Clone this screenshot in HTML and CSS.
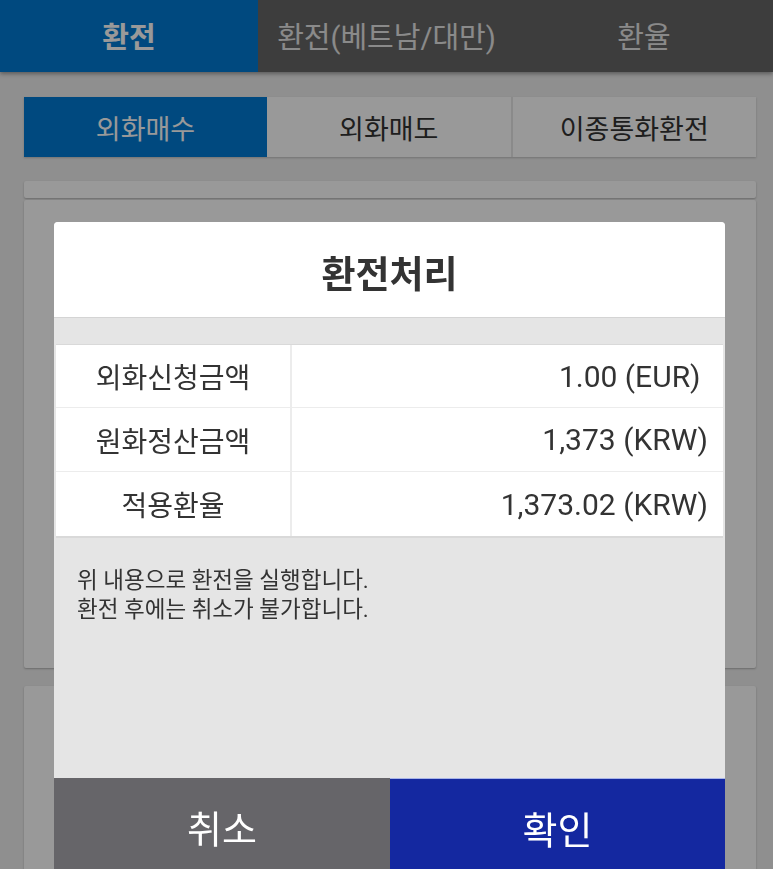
FILE: index.html
```html
<!DOCTYPE html>
<html lang="ko">
<head>
<meta charset="utf-8">
<link rel="stylesheet" href="styles.css">
</head>
<body>
<div class="page">
  <div class="topbar">
    <div class="toptab active">환전</div>
    <div class="toptab">환전(베트남/대만)</div>
    <div class="toptab">환율</div>
  </div>
  <div class="content">
    <div class="subtabs">
      <div class="subtab active">외화매수</div>
      <div class="subtab">외화매도</div>
      <div class="subtab">이종통화환전</div>
    </div>
    <div class="card card-thin"></div>
    <div class="card card-main"></div>
    <div class="card card-low"></div>
  </div>
</div>
<div class="overlay"></div>
<div class="modal">
  <div class="modal-title">환전처리</div>
  <div class="modal-body">
    <div class="table">
      <div class="row"><div class="label">외화신청금액</div><div class="value">1.00 (EUR)&nbsp;</div></div>
      <div class="row"><div class="label">원화정산금액</div><div class="value">1,373 (KRW)</div></div>
      <div class="row"><div class="label">적용환율</div><div class="value">1,373.02 (KRW)</div></div>
    </div>
    <p class="notice">위 내용으로 환전을 실행합니다.<br>환전 후에는 취소가 불가합니다.</p>
  </div>
  <div class="buttons">
    <div class="btn cancel">취소</div>
    <div class="btn ok">확인</div>
  </div>
</div>
</body>
</html>
```
FILE: styles.css
```css
html, body {
  margin: 0;
  padding: 0;
  height: 100%;
  overflow: hidden;
}
body {
  font-family: Roboto, "Noto Sans CJK KR", sans-serif;
  background: #eeeeee;
}
.page {
  height: 869px;
  display: flex;
  flex-direction: column;
}
.page > * { flex-shrink: 0; }
.topbar {
  display: flex;
  height: 72px;
  background: #666666;
  box-shadow: 0 2px 4px rgba(0,0,0,0.35);
  position: relative;
  z-index: 1;
}
.toptab {
  flex: 1;
  display: flex;
  align-items: center;
  justify-content: center;
  font-size: 29px;
  color: #e6e6e6;
  padding-bottom: 2px;
}
.toptab.active {
  flex: 0 0 258px;
  background: #007bd4;
  color: #ffffff;
  font-weight: 700;
}
.toptab:nth-child(2) { flex: 0 0 257px; }
.content {
  padding: 25px 17px 0 24px;
  display: flex;
  flex-direction: column;
}
.content > * { flex-shrink: 0; }
.subtabs {
  display: flex;
  height: 60px;
  background: #ffffff;
  box-shadow: 0 1px 2px rgba(0,0,0,0.2);
}
.subtab {
  flex: 1;
  display: flex;
  align-items: center;
  justify-content: center;
  font-size: 27px;
  color: #333333;
  border-left: 2px solid #e6e6e6;
}
.subtab.active {
  flex: 0 0 243px;
  background: #007bd4;
  color: #ffffff;
  border-left: none;
}
.subtab.active + .subtab { border-left: none; }
.card {
  background: #ffffff;
  box-shadow: 0 1px 2px rgba(0,0,0,0.25);
  border-radius: 2px;
}
.card-thin { margin-top: 24px; height: 17px; }
.card-main { margin-top: 2px; height: 468px; }
.card-low { margin-top: 18px; height: 200px; }
.overlay {
  position: fixed;
  inset: 0;
  background: rgba(0,0,0,0.4);
  z-index: 10;
}
.modal {
  position: fixed;
  z-index: 11;
  left: 54px;
  top: 222px;
  width: 671px;
  height: 647px;
  display: flex;
  flex-direction: column;
  border-radius: 4px 4px 0 0;
  overflow: hidden;
  background: #e5e5e5;
}
.modal-title {
  height: 96px;
  flex-shrink: 0;
  background: #ffffff;
  border-bottom: 1px solid #d4d4d4;
  display: flex;
  align-items: center;
  justify-content: center;
  font-size: 37px;
  font-weight: 700;
  color: #333333;
  padding-top: 4px;
  box-sizing: border-box;
}
.modal-body {
  flex: 1;
  padding: 26px 2px 0 2px;
}
.table {
  background: #ffffff;
  border-top: 1px solid #d9d9d9;
  border-bottom: 2px solid #d9d9d9;
}
.row {
  display: flex;
  height: 63px;
  border-top: 1px solid #ececec;
}
.row:first-child { border-top: none; height: 62px; }
.row:last-child { height: 64px; }
.label {
  flex: 0 0 234px;
  border-right: 2px solid #ececec;
  display: flex;
  align-items: center;
  justify-content: center;
  font-size: 28px;
  color: #333333;
}
.value {
  flex: 1;
  display: flex;
  align-items: center;
  justify-content: flex-end;
  padding-right: 15px;
  font-size: 30px;
  color: #333333;
}
.notice {
  margin: 28px 0 0 21px;
  font-size: 22.5px;
  line-height: 29px;
  color: #333333;
}
.buttons {
  display: flex;
  height: 91px;
  flex: 0 0 91px;
}
.btn {
  flex: 1;
  display: flex;
  align-items: center;
  justify-content: center;
  font-size: 38px;
  color: #ffffff;
  padding-top: 6px;
  box-sizing: border-box;
}
.cancel { background: #666569; flex: 0 0 336px; }
.ok { background: #1428a0; border-top: 1px solid #a8b4e8; }
```
